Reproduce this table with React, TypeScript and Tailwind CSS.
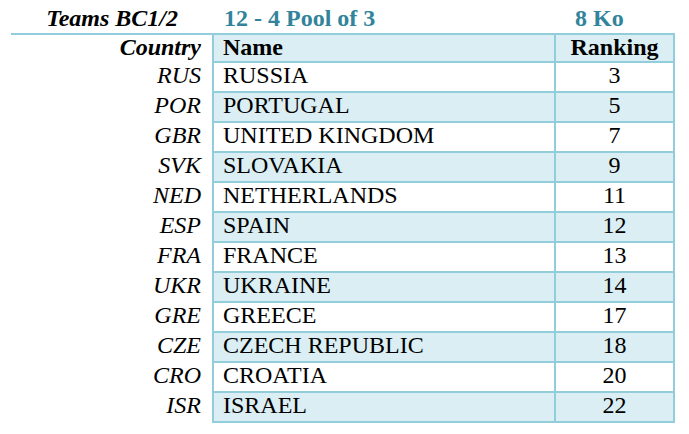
import React from 'react';

interface Team {
    code: string;
    name: string;
    ranking: number;
}

const teams: Team[] = [
    { code: 'RUS', name: 'RUSSIA', ranking: 3 },
    { code: 'POR', name: 'PORTUGAL', ranking: 5 },
    { code: 'GBR', name: 'UNITED KINGDOM', ranking: 7 },
    { code: 'SVK', name: 'SLOVAKIA', ranking: 9 },
    { code: 'NED', name: 'NETHERLANDS', ranking: 11 },
    { code: 'ESP', name: 'SPAIN', ranking: 12 },
    { code: 'FRA', name: 'FRANCE', ranking: 13 },
    { code: 'UKR', name: 'UKRAINE', ranking: 14 },
    { code: 'GRE', name: 'GREECE', ranking: 17 },
    { code: 'CZE', name: 'CZECH REPUBLIC', ranking: 18 },
    { code: 'CRO', name: 'CROATIA', ranking: 20 },
    { code: 'ISR', name: 'ISRAEL', ranking: 22 },
];

const App: React.FC = () => {
    return (
        <div className="font-['Liberation_Serif'] w-[689px] h-[434px] bg-white text-black text-[24px]">
            {/* Title line */}
            <div className="font-['Liberation_Serif'] flex h-[33px] pt-[5px] leading-[26px] font-bold">
                <div className="w-[212px] pr-[34px] text-right italic">Teams BC1/2</div>
                <div className="w-[342px] pl-[12px] text-[#31849b]">12 - 4 Pool of 3</div>
                <div className="pl-[21px] text-[#31849b]">8 Ko</div>
            </div>

            <div className="font-['Liberation_Serif'] ml-[11px] w-[664px] border-t-2 border-[#92cddc]">
                {/* Header */}
                <div className="flex h-[28px] leading-[24px]">
                    <div className="w-[201px] pr-[11px] text-right font-bold italic">Country</div>
                    <div className="w-[342px] pl-[9px] font-bold bg-[#daeef3] border-l-2 border-b-2 border-[#92cddc]">Name</div>
                    <div className="w-[121px] text-center font-bold bg-[#daeef3] border-x-2 border-b-2 border-[#92cddc]">Ranking</div>
                </div>

                {teams.map((team, idx) => {
                    const shaded = idx % 2 === 1;
                    return (
                        <div key={team.code} className="font-['Liberation_Serif'] flex h-[30px] leading-[24px]">
                            <div className="w-[201px] pr-[11px] text-right italic">{team.code}</div>
                            <div className={`w-[342px] pl-[9px] border-l-2 border-b-2 border-[#92cddc] ${shaded ? 'bg-[#daeef3]' : 'bg-white'}`}>
                                {team.name}
                            </div>
                            <div className={`w-[121px] text-center border-x-2 border-b-2 border-[#92cddc] ${shaded ? 'bg-[#daeef3]' : 'bg-white'}`}>
                                {team.ranking}
                            </div>
                        </div>
                    );
                })}
            </div>
        </div>
    );
};

export default App;
